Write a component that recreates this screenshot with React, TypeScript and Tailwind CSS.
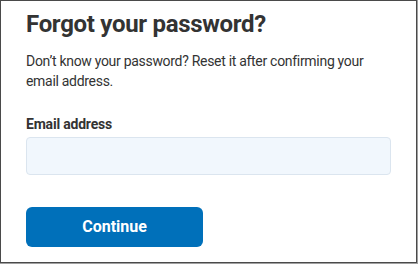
export default function App() {
  return (
    <div className="w-[418px] h-[264px] border-r border-b border-[#a0a0a0] bg-white">
      <div
        className="h-full w-full border border-[#4a4a4a] bg-white pl-[25px] pr-6 pt-[7px]"
        style={{ fontFamily: 'Roboto, "Liberation Sans", sans-serif' }}
      >
        <h1 className="text-[24px] font-bold leading-[32px] tracking-[-0.3px] text-[#333333]">Forgot your password?</h1>
        <p className="mt-[11px] text-[14px] leading-[20px] tracking-[-0.3px] text-[#333333]">
          Don’t know your password? Reset it after confirming your email address.
        </p>
        <form className="mt-[23px]" onSubmit={(e) => e.preventDefault()}>
          <label className="block text-[14px] font-bold leading-[20px] tracking-[-0.2px] text-[#333333]">Email address</label>
          <input
            type="email"
            className="mt-[3px] block h-[38px] w-[365px] rounded-[4px] border border-[#dbe5ef] bg-[#f1f7fd] px-3 text-[14px] outline-none"
          />
          <button
            type="submit"
            className="mt-[32px] flex h-[40px] w-[177px] items-center justify-center rounded-[6px] bg-[#0070ba] text-[16px] font-bold text-white"
          >
            Continue
          </button>
        </form>
      </div>
    </div>
  );
}
